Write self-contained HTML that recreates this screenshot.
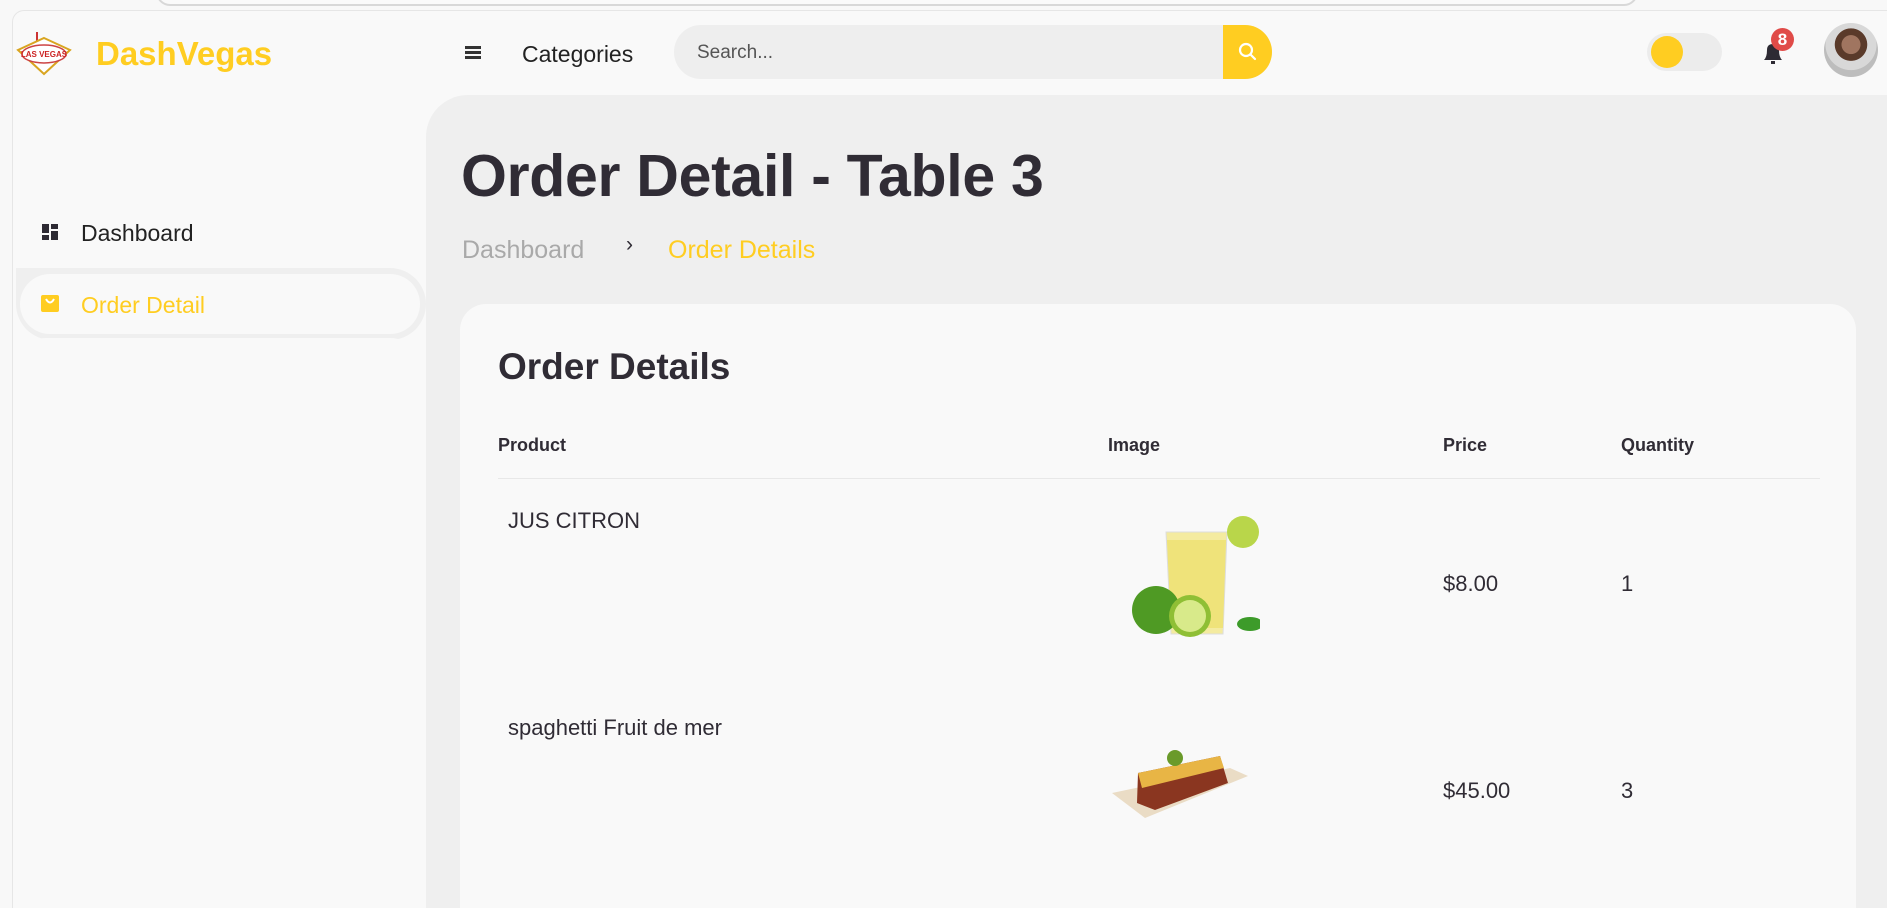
<!DOCTYPE html>
<html><head><meta charset="utf-8"><style>
*{margin:0;padding:0;box-sizing:border-box}
html,body{width:1887px;height:908px;overflow:hidden}
body{background:#f8f8f8;font-family:"Liberation Sans",sans-serif;color:#302c35;position:relative}
.abs{position:absolute}
.tab{left:156px;top:-10px;width:1482px;height:16px;border:2px solid #d8d8d8;border-radius:0 0 14px 14px;background:#fafafa}
.frame{left:12px;top:10px;width:1880px;height:898px;border-top:1px solid #e6e6e6;border-left:1px solid #e6e6e6;border-top-left-radius:12px;background:#f9f9f9}
.main{left:426px;top:95px;width:1461px;height:813px;background:#efefef;border-top-left-radius:42px}
.card{left:460px;top:304px;width:1396px;height:604px;background:#f9f9f9;border-radius:26px 26px 0 0}
</style></head><body>
<div class="abs tab"></div>
<div class="abs frame"></div>
<svg class="abs" style="left:15px;top:30px" width="58" height="46" viewBox="0 0 58 46">
<line x1="22" y1="2" x2="22" y2="14" stroke="#c33" stroke-width="2"/>
<polygon points="29,8 55,20 29,44 3,20" fill="#fff" stroke="#d9a520" stroke-width="2"/>
<ellipse cx="29" cy="24" rx="22" ry="9" fill="#fff" stroke="#c44" stroke-width="1.5"/>
<text x="29" y="27" font-size="8" text-anchor="middle" fill="#c22" font-family="Liberation Sans" font-weight="bold">LAS VEGAS</text>
</svg>
<div class="abs" style="left:96px;top:35px;font-size:33px;font-weight:bold;color:#ffcd21">DashVegas</div>
<div class="abs" style="left:465px;top:46px;width:16px;height:3px;background:#333;box-shadow:0 5px 0 #333,0 10px 0 #333"></div>
<div class="abs" style="left:522px;top:41px;font-size:23px;color:#222">Categories</div>
<div class="abs" style="left:674px;top:25px;width:598px;height:54px;background:#eeeeee;border-radius:27px"></div>
<div class="abs" style="left:697px;top:42px;font-size:19px;color:#555">Search...</div>
<div class="abs" style="left:1223px;top:25px;width:49px;height:54px;background:#ffcd21;border-radius:0 27px 27px 0"></div>
<svg class="abs" style="left:1237px;top:41px" width="22" height="22" viewBox="0 0 22 22"><circle cx="9" cy="9" r="6" fill="none" stroke="#fff" stroke-width="2.2"/><line x1="13.5" y1="13.5" x2="18" y2="18" stroke="#fff" stroke-width="2.2" stroke-linecap="round"/></svg>
<div class="abs" style="left:1647px;top:33px;width:75px;height:38px;background:#ececec;border-radius:19px"></div>
<div class="abs" style="left:1651px;top:36px;width:32px;height:32px;background:#ffcd21;border-radius:50%"></div>
<svg class="abs" style="left:1760px;top:40px" width="26" height="26" viewBox="0 0 26 26"><path d="M4 20 Q7 17 7 10 Q7 4 13 4 Q19 4 19 10 Q19 17 22 20 Z" fill="#2d2a33"/><rect x="11" y="21" width="4" height="3" fill="#2d2a33"/></svg>
<div class="abs" style="left:1771px;top:28px;width:23px;height:23px;background:#e04b48;border-radius:50%;color:#fff;font-size:17px;font-weight:bold;text-align:center;line-height:23px">8</div>
<div class="abs" style="left:1824px;top:23px;width:54px;height:54px;border-radius:50%;background:radial-gradient(circle at 50% 40%,#a07560 0 22%,#5a3a2a 23% 38%,#d8d8d8 39% 60%,#bdbdbd 61%)"></div>
<svg class="abs" style="left:42px;top:224px" width="16" height="16"><rect x="0" y="0" width="7" height="9" fill="#2d2a33"/><rect x="9" y="0" width="7" height="5" fill="#2d2a33"/><rect x="0" y="11" width="7" height="5" fill="#2d2a33"/><rect x="9" y="7" width="7" height="9" fill="#2d2a33"/></svg>
<div class="abs" style="left:81px;top:220px;font-size:23px;color:#222">Dashboard</div>
<div class="abs" style="left:16px;top:268px;width:410px;height:72px;background:#efefef;border-radius:0 36px 36px 36px"></div>
<div class="abs" style="left:20px;top:274px;width:400px;height:60px;background:#f9f9f9;border-radius:30px"></div>
<div class="abs" style="left:16px;top:338px;width:410px;height:570px;background:#f9f9f9;border-radius:30px 36px 0 0"></div>
<svg class="abs" style="left:41px;top:295px" width="18" height="17"><rect width="18" height="17" rx="2" fill="#ffcd21"/><path d="M5 4 Q9 11 13 4" stroke="#fff" stroke-width="2" fill="none"/></svg>
<div class="abs" style="left:81px;top:292px;font-size:23px;color:#ffcd21">Order Detail</div>
<div class="abs main"></div>
<div class="abs" style="left:461px;top:142px;font-size:59px;font-weight:bold;color:#302c35;letter-spacing:-0.3px">Order Detail - Table 3</div>
<div class="abs" style="left:462px;top:236px;font-size:25px;color:#a9a9a9">Dashboard</div>
<div class="abs" style="left:626px;top:233px;font-size:21px;color:#302c35">›</div>
<div class="abs" style="left:668px;top:236px;font-size:25px;color:#ffcd21">Order Details</div>
<div class="abs card"></div>
<div class="abs" style="left:498px;top:346px;font-size:37px;font-weight:bold;color:#302c35">Order Details</div>
<div class="abs" style="left:498px;top:435px;font-size:18px;font-weight:bold">Product</div>
<div class="abs" style="left:1108px;top:435px;font-size:18px;font-weight:bold">Image</div>
<div class="abs" style="left:1443px;top:435px;font-size:18px;font-weight:bold">Price</div>
<div class="abs" style="left:1621px;top:435px;font-size:18px;font-weight:bold">Quantity</div>
<div class="abs" style="left:498px;top:478px;width:1322px;height:1px;background:#e8e8e8"></div>
<div class="abs" style="left:508px;top:508px;font-size:22px">JUS CITRON</div>
<div class="abs" style="left:1443px;top:571px;font-size:22px">$8.00</div>
<div class="abs" style="left:1621px;top:571px;font-size:22px">1</div>
<div class="abs" style="left:508px;top:715px;font-size:22px">spaghetti Fruit de mer</div>
<div class="abs" style="left:1443px;top:778px;font-size:22px">$45.00</div>
<div class="abs" style="left:1621px;top:778px;font-size:22px">3</div>
<svg class="abs" style="left:1110px;top:510px" width="150" height="135" viewBox="0 0 150 135">
<path d="M56 22 L117 22 L113 124 L61 124 Z" fill="#f4eba0" stroke="#ddd"/>
<path d="M57 30 L116 30 L113 118 L61 118 Z" fill="#efe37a"/>
<circle cx="133" cy="22" r="16" fill="#b9d64a"/>
<circle cx="46" cy="100" r="24" fill="#4f9a24"/>
<circle cx="80" cy="106" r="21" fill="#8fbf35"/><circle cx="80" cy="106" r="16" fill="#d8ea8a"/>
<ellipse cx="140" cy="114" rx="13" ry="7" fill="#3d9b2a"/>
</svg>
<svg class="abs" style="left:1110px;top:748px" width="145" height="72" viewBox="0 0 145 72">
<polygon points="2,45 120,20 138,28 35,70" fill="#eadcc5"/>
<polygon points="28,25 110,8 118,35 45,62 27,55" fill="#8a3620"/>
<polygon points="28,25 110,8 114,20 32,40" fill="#e8b545"/>
<circle cx="65" cy="10" r="8" fill="#6a9a2a"/>
</svg>
</body></html>
